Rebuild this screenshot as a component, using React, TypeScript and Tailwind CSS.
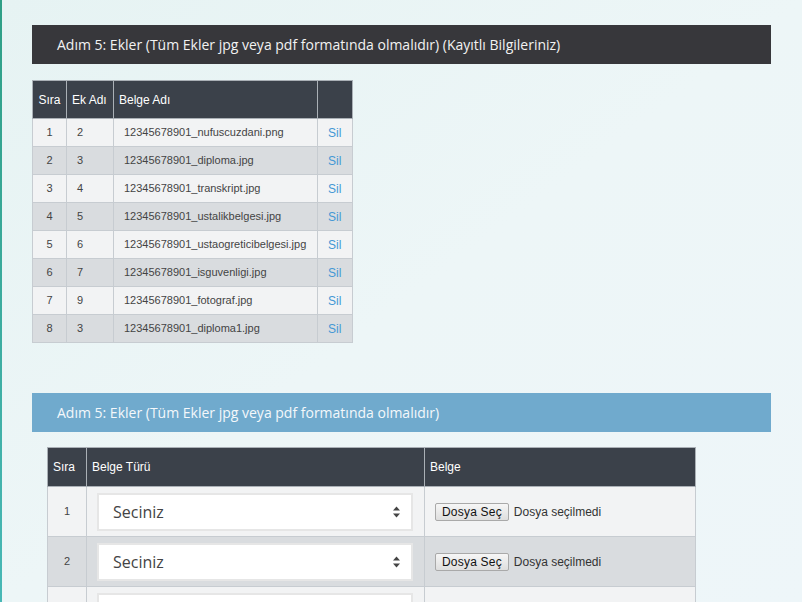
import React from "react";

const rows1 = [
  ["1", "2", "12345678901_nufuscuzdani.png"],
  ["2", "3", "12345678901_diploma.jpg"],
  ["3", "4", "12345678901_transkript.jpg"],
  ["4", "5", "12345678901_ustalikbelgesi.jpg"],
  ["5", "6", "12345678901_ustaogreticibelgesi.jpg"],
  ["6", "7", "12345678901_isguvenligi.jpg"],
  ["7", "9", "12345678901_fotograf.jpg"],
  ["8", "3", "12345678901_diploma1.jpg"],
];

const arial = { fontFamily: '"Liberation Sans", Arial, sans-serif' };
const open = { fontFamily: '"Open Sans", "Noto Sans", sans-serif' };

function Chevron() {
  return (
    <svg width="9" height="14" viewBox="0 0 9 14" className="shrink-0">
      <path d="M4.5 1.5 L8 5.5 H1 Z" fill="#444" />
      <path d="M4.5 12.5 L8 8.5 H1 Z" fill="#444" />
    </svg>
  );
}

function FileInput() {
  return (
    <div className="flex items-center gap-[5px] text-[12px]" style={arial}>
      <div className="h-[18px] px-[6px] flex items-center border border-[#a9a9a9] rounded-[2px] bg-gradient-to-b from-[#f6f6f6] to-[#dedede] text-[#111] tracking-[0.2px]">
        Dosya Seç
      </div>
      <span className="text-[#333]">Dosya seçilmedi</span>
    </div>
  );
}

function Select() {
  return (
    <div className="h-[38px] w-[316px] bg-white border-2 border-[#e6e6e6] flex items-center justify-between pl-[14px] pr-[10px]">
      <span className="text-[16px] text-[#444]" style={open}>Seciniz</span>
      <Chevron />
    </div>
  );
}

export default function App() {
  return (
    <div className="w-[802px] h-[602px] overflow-hidden flex bg-gradient-to-br from-[#e6f3f3] via-[#edf6f7] to-[#eef6f9]">
      <div className="w-[2px] shrink-0 bg-gradient-to-b from-[#2f9f86] to-[#48b8b6]" />
      <div className="flex-1 flex flex-col">
        <div className="pt-[25px] pl-[30px] pr-[31px] pb-[25px]">
          <div className="h-[39px] bg-[#37373b] flex items-center pl-[25px] text-[14px] text-[#f2f2f2]" style={open}>
            Adım 5: Ekler (Tüm Ekler jpg veya pdf formatında olmalıdır) (Kayıtlı Bilgileriniz)
          </div>
          <table className="mt-[16px] border-collapse table-fixed w-[320px] text-[11px]" style={arial}>
            <colgroup>
              <col className="w-[34px]" />
              <col className="w-[47px]" />
              <col className="w-[204px]" />
              <col className="w-[35px]" />
            </colgroup>
            <thead>
              <tr className="h-[38px] bg-[#3b414a] text-white text-[12px]">
                <th className="border border-[#aab0b6] font-normal text-center px-0">Sıra</th>
                <th className="border border-[#aab0b6] font-normal text-left pl-[5px]">Ek Adı</th>
                <th className="border border-[#aab0b6] font-normal text-left pl-[5px]">Belge Adı</th>
                <th className="border border-[#aab0b6] font-normal"></th>
              </tr>
            </thead>
            <tbody>
              {rows1.map((r, i) => (
                <tr key={i} className={`h-[28px] ${i % 2 === 0 ? "bg-[#f2f3f4]" : "bg-[#d9dcdf]"} text-[#444]`}>
                  <td className="border border-[#c7ccd1] text-center">{r[0]}</td>
                  <td className="border border-[#c7ccd1] pl-[10px]">{r[1]}</td>
                  <td className="border border-[#c7ccd1] pl-[10px]">{r[2]}</td>
                  <td className="border border-[#c7ccd1] pl-[10px] text-[#4598d5] text-[12px]">Sil</td>
                </tr>
              ))}
            </tbody>
          </table>
        </div>
        <div className="h-px bg-[#cfdadd]" />
        <div className="pt-[25px] pl-[30px] pr-[31px]">
          <div className="h-[39px] bg-[#70aacd] flex items-center pl-[25px] text-[14px] text-[#f4f8fb]" style={open}>
            Adım 5: Ekler (Tüm Ekler jpg veya pdf formatında olmalıdır)
          </div>
          <div className="pl-[15px] pt-[15px]">
            <table className="border-collapse table-fixed w-[648px] text-[11px]" style={arial}>
              <colgroup>
                <col className="w-[39px]" />
                <col className="w-[338px]" />
                <col className="w-[271px]" />
              </colgroup>
              <thead>
                <tr className="h-[39px] bg-[#3b414a] text-white text-[12px]">
                  <th className="border border-[#aab0b6] font-normal text-left pl-[5px]">Sıra</th>
                  <th className="border border-[#aab0b6] font-normal text-left pl-[5px]">Belge Türü</th>
                  <th className="border border-[#aab0b6] font-normal text-left pl-[5px]">Belge</th>
                </tr>
              </thead>
              <tbody>
                {[0, 1, 2].map((i) => (
                  <tr key={i} className={`h-[50px] ${i % 2 === 0 ? "bg-[#f2f3f4]" : "bg-[#d9dcdf]"} text-[#444]`}>
                    <td className="border border-[#c7ccd1] text-center">{i + 1}</td>
                    <td className="border border-[#c7ccd1] pl-[10px]"><Select /></td>
                    <td className="border border-[#c7ccd1] pl-[10px]"><FileInput /></td>
                  </tr>
                ))}
              </tbody>
            </table>
          </div>
        </div>
      </div>
    </div>
  );
}
